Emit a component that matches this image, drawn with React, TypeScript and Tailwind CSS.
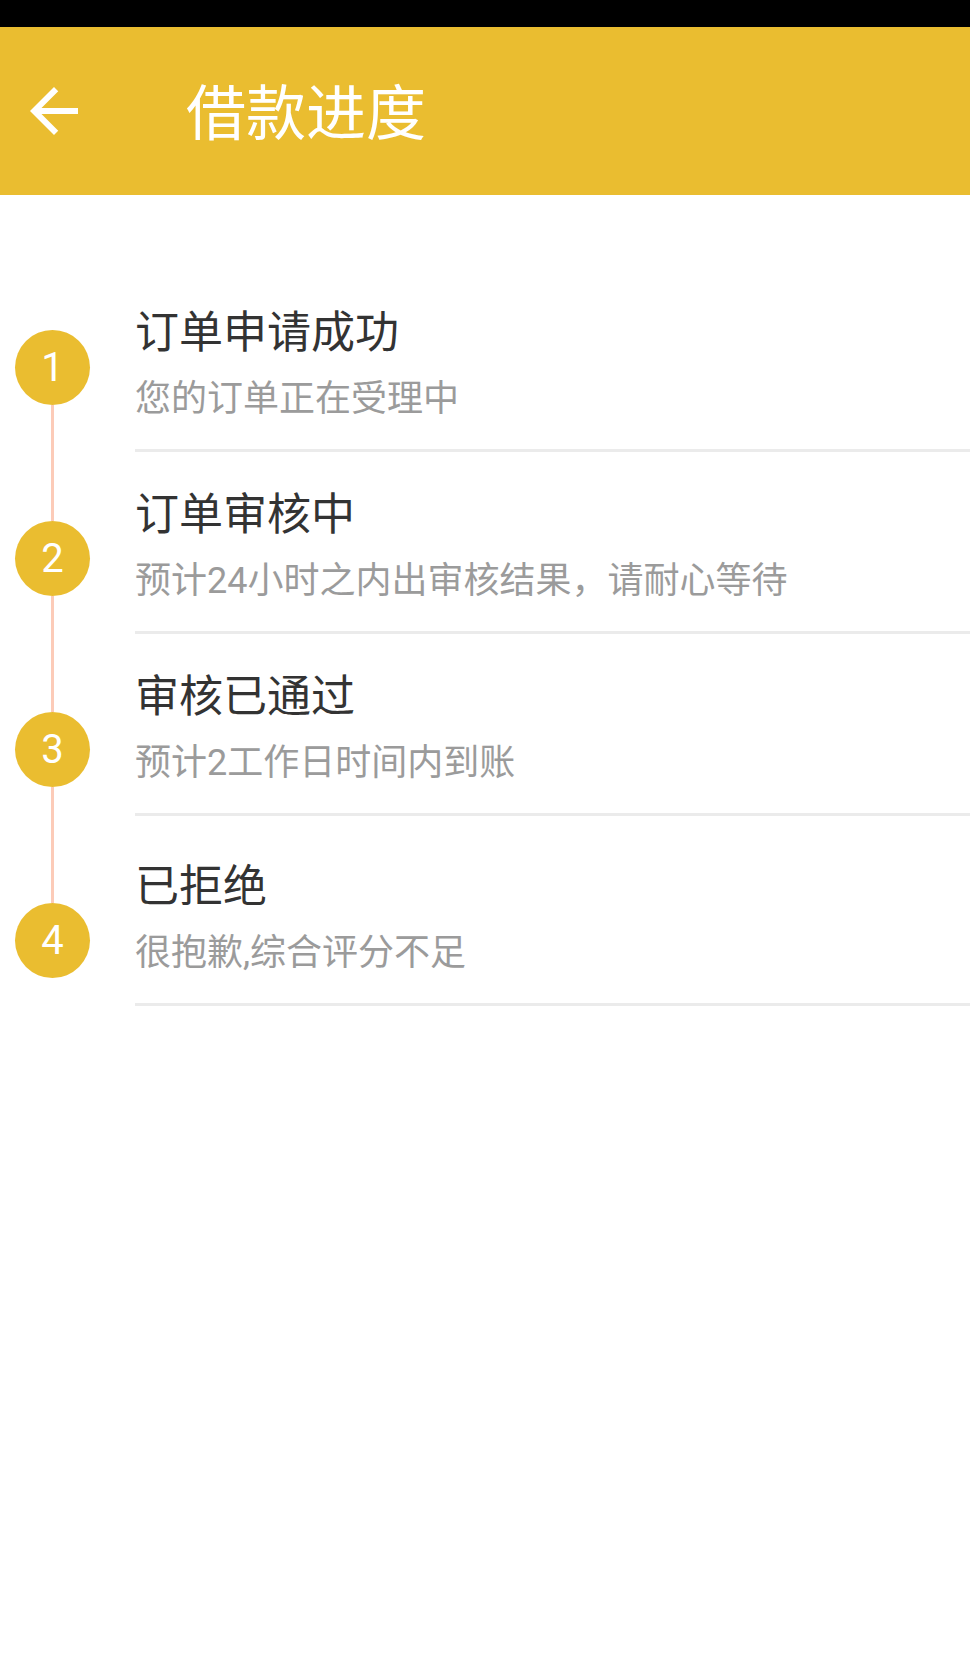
const steps = [
  { no: 1, title: "订单申请成功", desc: "您的订单正在受理中" },
  { no: 2, title: "订单审核中", desc: "预计24小时之内出审核结果，请耐心等待" },
  { no: 3, title: "审核已通过", desc: "预计2工作日时间内到账" },
  { no: 4, title: "已拒绝", desc: "很抱歉,综合评分不足" },
];

function BackArrow() {
  return (
    <svg width="72" height="72" viewBox="0 0 24 24" fill="#ffffff">
      <path d="M20 11H7.83l5.59-5.59L12 4l-8 8 8 8 1.41-1.41L7.83 13H20v-2z" />
    </svg>
  );
}

export default function App() {
  return (
    <div className="w-[970px] h-[1670px] bg-white font-['Roboto','Noto_Sans_CJK_SC',sans-serif]">
      <div className="h-[27px] bg-black" />

      <header className="h-[168px] bg-[#eabd30] flex items-center pl-[18px]">
        <BackArrow />
        <h1 className="ml-[96px] mt-[8px] text-[60px] leading-[60px] text-white">借款进度</h1>
      </header>

      <div className="flex">
        {/* timeline */}
        <div className="w-[135px] pl-[15px] pt-[135px] flex flex-col">
          {steps.map((s, i) => (
            <div key={s.no} className="flex flex-col">
              <div className="w-[75px] h-[75px] rounded-full bg-[#eabd30] flex items-center justify-center text-white text-[40px] leading-none">
                {s.no}
              </div>
              {i < steps.length - 1 && <div className="ml-[36px] w-[3px] h-[116px] bg-[#fccbb8]" />}
            </div>
          ))}
        </div>

        {/* rows */}
        <div className="flex-1 pt-[75px]">
          {steps.map((s, i) => (
            <div
              key={s.no}
              className={`${i === steps.length - 1 ? "pt-[49px]" : "pt-[41px]"} pb-[32px] border-b-[3px] border-[#ebebeb]`}
            >
              <div className="text-[44px] leading-[44px] text-[#333333]">{s.title}</div>
              <div className="mt-[26px] text-[36px] leading-[36px] text-[#9b9b9b]">{s.desc}</div>
            </div>
          ))}
        </div>
      </div>
    </div>
  );
}
